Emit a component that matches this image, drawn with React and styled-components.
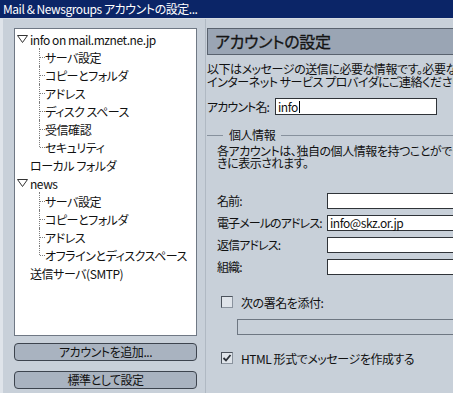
import React from "react";
import styled, { createGlobalStyle } from "styled-components";

const Global = createGlobalStyle`
  html, body {
    margin: 0;
    padding: 0;
    background: #c8d0d9;
  }
  body {
    font-family: "Noto Sans CJK JP", "Liberation Sans", sans-serif;
    font-size: 12px;
    font-feature-settings: "palt";
    letter-spacing: -0.45px;
    color: #111;
  }
`;

const Window = styled.div`
  width: 453px;
  height: 393px;
  display: flex;
  flex-direction: column;
  overflow: hidden;
  background: #c8d0d9;
`;

const TitleBar = styled.div`
  height: 18px;
  flex: none;
  background: #0b2567;
  color: #fff;
  font-size: 12px;
  line-height: 18px;
  padding-left: 3px;
  white-space: nowrap;
`;

const Body = styled.div`
  flex: 1;
  display: flex;
  min-height: 0;
  border-left: 3px solid #dfe4ea;
  border-top: 1px solid #d6dce3;
`;

const LeftPane = styled.div`
  width: 183px;
  flex: none;
  padding: 9px 0 4px 11px;
  display: flex;
  flex-direction: column;
`;

const Tree = styled.div`
  flex: 1;
  background: #fff;
  border: 1px solid #6f7884;
  padding-top: 1px;
`;

const Row = styled.div`
  height: 18px;
  display: flex;
  align-items: center;
  white-space: nowrap;
  padding-left: ${(p) => (p.$child ? 24 : 0)}px;
`;

const Twisty = styled.span`
  width: 15px;
  height: 18px;
  flex: none;
  display: flex;
  align-items: center;
  padding-left: 2px;
  box-sizing: border-box;
`;

const Connector = styled.span`
  position: relative;
  width: 6px;
  height: 18px;
  flex: none;
  &::before {
    content: "";
    position: absolute;
    left: 0;
    top: 0;
    height: ${(p) => (p.$last ? 9 : 18)}px;
    border-left: 1px dotted #7c7c7c;
  }
  &::after {
    content: "";
    position: absolute;
    left: 1px;
    top: 9px;
    width: 5px;
    border-top: 1px dotted #7c7c7c;
  }
`;

const Button = styled.div`
  height: 16px;
  margin-top: ${(p) => p.$gap}px;
  border: 1px solid #3d444e;
  border-radius: 4px;
  background: #a9b3c0;
  text-align: center;
  line-height: 16px;
  font-size: 12px;
  color: #111;
`;

const Splitter = styled.div`
  width: 10px;
  flex: none;
  position: relative;
  &::after {
    content: "";
    position: absolute;
    top: 0;
    bottom: 0;
    left: 8px;
    border-left: 1px solid #b0b9c3;
  }
`;

const RightPane = styled.div`
  flex: 1;
  min-width: 0;
  overflow: hidden;
  padding-top: 9px;
`;

const Inner = styled.div`
  width: 300px;
`;

const Header = styled.div`
  height: 25px;
  border: 1px solid #59626e;
  border-right: none;
  background: #9aa5b4;
  font-size: 16px;
  letter-spacing: -0.3px;
  line-height: 25px;
  padding-left: 7px;
  color: #141414;
  white-space: nowrap;
  -webkit-text-stroke: 0.3px #141414;
`;

const Text = styled.div`
  margin-top: ${(p) => p.$top || 0}px;
  line-height: ${(p) => p.$lh || 13}px;
  white-space: nowrap;
`;

const InlineRow = styled.div`
  margin-top: ${(p) => p.$top}px;
  display: flex;
  align-items: center;
  white-space: nowrap;
`;

const Label = styled.span`
  width: ${(p) => (p.$w ? `${p.$w}px` : "auto")};
  flex: none;
  line-height: 14px;
  letter-spacing: -0.9px;
  white-space: nowrap;
`;

const Field = styled.div`
  width: ${(p) => (p.$w ? `${p.$w}px` : "auto")};
  flex: ${(p) => (p.$w ? "none" : "1")};
  height: ${(p) => p.$h || 15}px;
  box-sizing: border-box;
  background: ${(p) => (p.$disabled ? "#c8d0d9" : "#fff")};
  border: 1px solid ${(p) => (p.$disabled ? "#6e7782" : "#2f3338")};
  margin-left: ${(p) => p.$ml || 0}px;
  padding-left: 2px;
  font-size: 12px;
  line-height: ${(p) => (p.$h || 15) - 2}px;
  display: flex;
  align-items: center;
  white-space: nowrap;
`;

const Caret = styled.span`
  display: inline-block;
  width: 1px;
  height: 12px;
  margin-left: 1px;
  background: #000;
`;

const Group = styled.fieldset`
  margin: 13px 0 0 -1px;
  padding: 3px 0 0 10px;
  border: 1px solid #87919d;
  border-right: none;
  border-bottom: none;
  min-width: 0;
  height: 300px;
`;

const Legend = styled.legend`
  margin-left: 6px;
  padding: 0 6px;
  line-height: 14px;
`;

const FormGrid = styled.div`
  margin-top: 24px;
  display: grid;
  grid-template-columns: 110px 1fr;
  row-gap: 6px;
  align-items: center;
`;

const CheckRow = styled.div`
  margin-top: ${(p) => p.$top}px;
  display: flex;
  align-items: center;
  height: 12px;
  padding-left: 4px;
  white-space: nowrap;
`;

const Box = styled.span`
  width: 12px;
  height: 12px;
  box-sizing: border-box;
  flex: none;
  border: 1px solid #4b525c;
  border-right-color: #8a939e;
  border-bottom-color: #8a939e;
  background: #dfe4ea;
  margin-right: 8px;
  display: flex;
  align-items: center;
  justify-content: center;
`;

const Triangle = () => (
  <svg width="11" height="8" viewBox="0 0 11 8">
    <polygon points="0.5,0.5 10.5,0.5 5.5,7.5" fill="none" stroke="#333" strokeWidth="1" />
  </svg>
);

const Check = () => (
  <svg width="10" height="10" viewBox="0 0 10 10">
    <polyline points="1.5,5 4,7.5 8.5,2" fill="none" stroke="#2a2f36" strokeWidth="1.8" />
  </svg>
);

const tree = [
  { label: "info on mail.mznet.ne.jp", open: true },
  { label: "サーバ設定", child: true },
  { label: "コピーとフォルダ", child: true },
  { label: "アドレス", child: true },
  { label: "ディスク スペース", child: true },
  { label: "受信確認", child: true },
  { label: "セキュリティ", child: true, last: true },
  { label: "ローカル フォルダ" },
  { label: "news", open: true },
  { label: "サーバ設定", child: true },
  { label: "コピーとフォルダ", child: true },
  { label: "アドレス", child: true },
  { label: "オフラインとディスクスペース", child: true, last: true },
  { label: "送信サーバ(SMTP)" },
];

const fields = [
  { label: "名前:", value: "" },
  { label: "電子メールのアドレス:", value: "info@skz.or.jp" },
  { label: "返信アドレス:", value: "" },
  { label: "組織:", value: "" },
];

export default function App() {
  return (
    <Window>
      <Global />
      <TitleBar>Mail &amp; Newsgroups アカウントの設定...</TitleBar>
      <Body>
        <LeftPane>
          <Tree>
            {tree.map((item, i) =>
              item.child ? (
                <Row key={i} $child>
                  <Connector $last={item.last} />
                  {item.label}
                </Row>
              ) : (
                <Row key={i}>
                  <Twisty>{item.open && <Triangle />}</Twisty>
                  {item.label}
                </Row>
              )
            )}
          </Tree>
          <Button $gap={7}>アカウントを追加...</Button>
          <Button $gap={10}>標準として設定</Button>
        </LeftPane>
        <Splitter />
        <RightPane>
          <Inner>
            <Header>アカウントの設定</Header>
            <Text $top={7}>以下はメッセージの送信に必要な情報です。必要な情報</Text>
            <Text>インターネット サービス プロバイダにご連絡ください。</Text>
            <InlineRow $top={10}>
              <Label $w={68}>アカウント名:</Label>
              <Field $w={162} $h={17}>
                info<Caret />
              </Field>
            </InlineRow>
            <Group>
              <Legend>個人情報</Legend>
              <Text $lh={12}>各アカウントは、独自の個人情報を持つことができます。</Text>
              <Text $lh={12}>きに表示されます。</Text>
              <FormGrid>
                {fields.map((f) => (
                  <React.Fragment key={f.label}>
                    <Label>{f.label}</Label>
                    <Field $h={16}>{f.value}</Field>
                  </React.Fragment>
                ))}
              </FormGrid>
              <CheckRow $top={21}>
                <Box />
                次の署名を添付:
              </CheckRow>
              <InlineRow $top={11}>
                <Field $disabled $h={16} $ml={20} />
              </InlineRow>
              <CheckRow $top={17}>
                <Box>
                  <Check />
                </Box>
                HTML 形式でメッセージを作成する
              </CheckRow>
            </Group>
          </Inner>
        </RightPane>
      </Body>
    </Window>
  );
}
